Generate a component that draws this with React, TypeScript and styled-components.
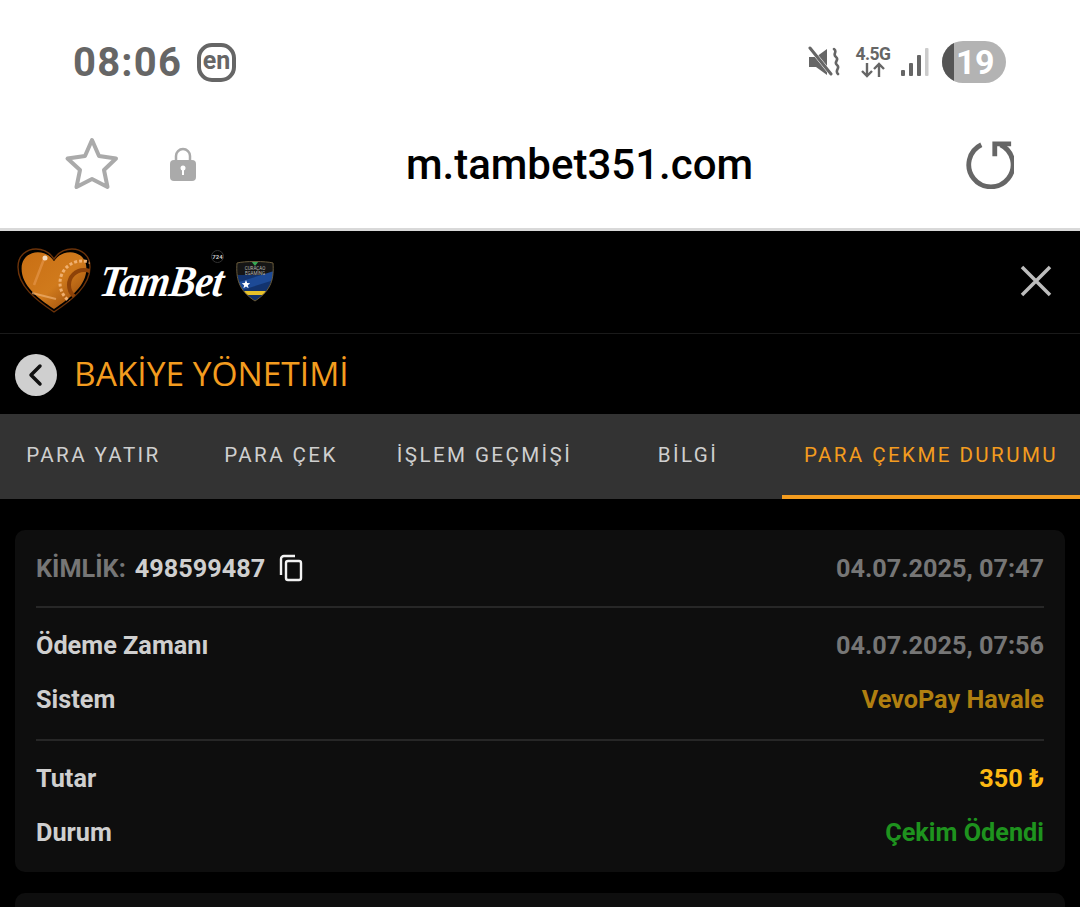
import React from "react";
import styled, { createGlobalStyle } from "styled-components";

const Global = createGlobalStyle`
  html, body { margin: 0; padding: 0; background: #000; }
  body { font-family: Roboto, "Liberation Sans", sans-serif; }
  #root { width: 1080px; height: 907px; overflow: hidden; }
  * { box-sizing: border-box; }
`;

const Page = styled.div`width: 1080px; height: 907px; background: #000; display: flex; flex-direction: column; overflow: hidden;`;
const Chrome = styled.div`background: #fff; height: 231px; border-bottom: 3px solid #d9d9d9; display: flex; flex-direction: column; flex: none;`;
const StatusBar = styled.div`height: 124px; padding: 0 74px 0 73px; display: flex; align-items: center; justify-content: space-between;`;
const StatusLeft = styled.div`display: flex; align-items: center; gap: 15px;`;
const Clock = styled.span`font-family: Roboto, sans-serif; font-weight: 700; font-size: 40px; letter-spacing: 1.2px; color: #666;`;
const LangBadge = styled.span`width: 39px; height: 39px; border: 4px solid #666; border-radius: 15px; display: flex; align-items: center; justify-content: center; color: #666; font-size: 25px; font-weight: 700; line-height: 1; padding-bottom: 3px;`;
const StatusRight = styled.div`display: flex; align-items: center;`;
const NetStack = styled.div`display: flex; flex-direction: column; align-items: center; margin: 0 9px 0 14px; width: 38px;`;
const NetLabel = styled.span`font-size: 17.5px; font-weight: 700; letter-spacing: -0.5px; color: #666; line-height: 16px;`;
const Battery = styled.div`position: relative; width: 64px; height: 42px; border-radius: 21px; margin-left: 13px; background: #b3b3b3; overflow: hidden; display: flex; align-items: center; justify-content: flex-end; padding-right: 12px;`;
const BatteryFill = styled.span`position: absolute; left: 0; top: 0; bottom: 0; width: 12px; background: #555;`;
const BatteryText = styled.span`color: #fff; font-size: 34px; font-weight: 700; line-height: 1; letter-spacing: -0.5px;`;
const AddressBar = styled.div`flex: 1; display: grid; grid-template-columns: 1fr auto 1fr; align-items: center; padding: 0 64px 24px 64px;`;
const AddressLeft = styled.div`display: flex; align-items: center; gap: 49px;`;
const AddressRight = styled.div`display: flex; justify-content: flex-end; margin-right: 2px;`;
const Url = styled.span`font-family: Roboto, sans-serif; font-weight: 500; font-size: 42px; color: #000; margin-left: 79px;`;

const Header = styled.div`height: 103px; flex: none; border-bottom: 1px solid #1a1a1a; display: flex; align-items: center; justify-content: space-between; padding: 0 28px 2px 16px;`;
const LogoWrap = styled.div`display: flex; align-items: center; position: relative;`;
const LogoText = styled.span`font-family: "Liberation Serif", serif; font-style: italic; font-weight: 700; font-size: 40px; color: #fff; margin: 0 11px 0 8px; letter-spacing: -0.7px; width: 125px; white-space: nowrap; transform: skewX(-8deg) scaleY(1.1);`;
const Badge724 = styled.span`position: absolute; left: 195px; top: 3px; width: 13px; height: 13px; border: 1px solid #333; border-radius: 50%; font-size: 6px; font-weight: 700; color: #ccc; display: flex; align-items: center; justify-content: center;`;
const TitleRow = styled.div`height: 80px; flex: none; display: flex; align-items: center; gap: 17px; padding: 2px 0 0 15px;`;
const BackButton = styled.div`width: 42px; height: 42px; border-radius: 50%; background: #cfcfcf; display: flex; align-items: center; justify-content: center;`;
const Title = styled.h1`margin: 0 0 5px; font-family: "Open Sans", sans-serif; font-weight: 400; font-size: 33.5px; color: #f39c1f; white-space: nowrap;`;
const Tabs = styled.div`height: 85px; flex: none; background: #333; display: grid; grid-template-columns: 187px 188px 219px 188px 298px;`;
const Tab = styled.div<{ $active?: boolean }>`display: flex; align-items: center; justify-content: center; font-size: 20.6px; letter-spacing: 2.4px; white-space: nowrap; color: ${(p) => (p.$active ? "#f39c1f" : "#cfcfcf")}; border-bottom: 4px solid ${(p) => (p.$active ? "#f39c1f" : "transparent")};`;
const Content = styled.div`flex: 1; padding: 31px 15px 0; display: flex; flex-direction: column; gap: 21px;`;
const Card = styled.div`background: #0e0e0e; border-radius: 10px; padding: 0 21px; flex: none;`;
const Section = styled.div<{ $last?: boolean; $first?: boolean }>`display: flex; flex-direction: column; padding: ${(p) => (p.$first ? "11px 0" : "10px 0 13px")}; border-bottom: ${(p) => (p.$last ? "none" : "2px solid #272727")};`;
const Row = styled.div`height: 54px; display: flex; align-items: center; justify-content: space-between; font-size: 25.25px; font-weight: 700;`;
const Label = styled.span`color: #cfcfcf; display: flex; align-items: center;`;
const Muted = styled.span`color: #767676;`;
const Id = styled.span`color: #cfcfcf; margin-left: 9px;`;
const CopyIcon = styled.span`display: inline-flex; margin-left: 13px;`;
const Value = styled.span<{ $color: string }>`color: ${(p) => p.$color};`;
const NextCard = styled(Card)`height: 60px;`;

const HEART = "M38 65C20 53 2 39 2 20C2 8 11 2 20 2C28 2 34 6 38 12C42 6 48 2 56 2C65 2 74 8 74 20C74 39 56 53 38 65Z";

const Heart = () => (
  <svg width="76" height="68" viewBox="0 0 76 68">
    <defs>
      <linearGradient id="h" x1="0" y1="0" x2="1" y2="1">
        <stop offset="0" stopColor="#c96f14" />
        <stop offset="0.55" stopColor="#d07a1c" />
        <stop offset="1" stopColor="#8e4208" />
      </linearGradient>
      <clipPath id="hc"><path d={HEART} /></clipPath>
    </defs>
    <path d={HEART} fill="url(#h)" transform="translate(3.800 3.400) scale(.9)" />
    <path d={HEART} fill="none" stroke="#6b3209" strokeWidth="1.400" />
    <g clipPath="url(#hc)" fill="none">
      <circle cx="66" cy="36" r="22" stroke="#f0b070" strokeWidth="3" strokeDasharray="3 2" />
      <circle cx="68" cy="38" r="15" stroke="#8e4208" strokeWidth="4" />
      <path d="M28 12L18 38" stroke="#e89a50" strokeWidth="2.500" opacity=".6" />
      <path d="M16 46L40 52" stroke="#f0b070" strokeWidth="2" opacity=".7" />
      <circle cx="29" cy="11" r="2.500" fill="#f6dcc0" />
    </g>
  </svg>
);

const Shield = () => (
  <svg width="38" height="42" viewBox="0 0 38 42">
    <defs><clipPath id="s"><path d="M1 3C8 1 30 1 37 3C38 18 36 30 19 41C2 30 0 18 1 3Z" /></clipPath></defs>
    <g clipPath="url(#s)">
      <rect width="38" height="42" fill="#12336e" />
      <rect width="38" height="15" fill="#151515" />
      <path d="M0 23L38 11V20L0 32Z" fill="#1d4a96" />
      <rect y="31" width="38" height="4" fill="#e8c22a" />
      <path d="M15 1h8l-4 5Z" fill="#38a855" />
      <text x="19" y="10" textAnchor="middle" fontSize="4.500" fill="#bbb" fontFamily="Roboto, sans-serif">CURAÇAO</text>
      <text x="19" y="14.500" textAnchor="middle" fontSize="4.500" fill="#bbb" fontFamily="Roboto, sans-serif">EGAMING</text>
      <path d="M10 20l1.200 3 3 .2-2.400 2 .8 3-2.600-1.700L7.400 28.200l.8-3-2.400-2 3-.2Z" fill="#fff" />
    </g>
    <path d="M1 3C8 1 30 1 37 3C38 18 36 30 19 41C2 30 0 18 1 3Z" fill="none" stroke="#6a5a38" strokeWidth="1" />
  </svg>
);

const Mute = () => (
  <svg width="32" height="32" viewBox="0 0 32 32" fill="#666">
    <path d="M1 11h7L19 3v26L8 21H1Z" />
    <path d="M2 2L23 28" stroke="#fff" strokeWidth="4" />
    <path d="M2 2L23 28" stroke="#666" strokeWidth="3" strokeLinecap="round" />
    <path d="M26 3c4 3-2 5 2 8s-3 5 1 8-3 5 1 9" fill="none" stroke="#666" strokeWidth="2.600" strokeLinecap="round" />
  </svg>
);
const Arrows = () => (
  <svg width="26" height="16" viewBox="0 0 26 16" fill="none" stroke="#666" strokeWidth="2.400">
    <path d="M7 1V14M2 9l5 5 5-5M19 15V2M14 7l5-5 5 5" />
  </svg>
);
const Signal = () => (
  <svg width="28" height="30" viewBox="0 0 28 30">
    <rect x="0" y="23" width="4" height="6" rx="1" fill="#666" />
    <rect x="8" y="16" width="4" height="13" rx="1" fill="#666" />
    <rect x="16" y="8" width="4" height="21" rx="1" fill="#666" />
    <rect x="24" y="1" width="3.500" height="28" rx="1" fill="#ccc" />
  </svg>
);
const Star = () => (
  <svg width="56" height="54" viewBox="0 0 56 54" fill="none">
    <path d="M28 3L35 19L52 21.500L40 33L43.500 50L28 42L12.500 50L16 33L3.500 21.500L21 19Z" stroke="#aaa" strokeWidth="4" strokeLinejoin="round" />
  </svg>
);
const Lock = () => (
  <svg width="28" height="36" viewBox="0 0 28 36">
    <path d="M7 15V10a7 7 0 0 1 14 0v5" fill="none" stroke="#aaa" strokeWidth="2.500" />
    <rect x="1" y="14" width="26" height="21" rx="4" fill="#aaa" />
    <circle cx="14" cy="22" r="2.500" fill="#fff" />
    <rect x="13" y="23" width="2" height="6" fill="#fff" />
  </svg>
);
const Reload = () => (
  <svg width="50" height="50" viewBox="0 0 52 52" fill="none" stroke="#666" strokeWidth="5">
    <path d="M18 6A23 23 0 1 0 38 6" />
    <path d="M32 18V5H49" />
  </svg>
);
const Close = () => (
  <svg width="32" height="32" viewBox="0 0 32 32" stroke="#bdbdbd" strokeWidth="3.500">
    <path d="M2 2L30 30M30 2L2 30" />
  </svg>
);
const Back = () => (
  <svg width="20" height="24" viewBox="0 0 20 24" fill="none" stroke="#111" strokeWidth="3.500" strokeLinecap="round" strokeLinejoin="round">
    <path d="M14 3L5 12L14 21" />
  </svg>
);
const Copy = () => (
  <svg width="26" height="28" viewBox="0 0 26 28" fill="none" stroke="#f2f2f2" strokeWidth="2.400">
    <path d="M3 21V5a3 3 0 0 1 3-3h11" />
    <rect x="8" y="7" width="15" height="19" rx="2" />
  </svg>
);

export default function App() {
  return (
    <Page>
      <Global />
      <Chrome>
        <StatusBar>
          <StatusLeft>
            <Clock>08:06</Clock>
            <LangBadge>en</LangBadge>
          </StatusLeft>
          <StatusRight>
            <Mute />
            <NetStack>
              <NetLabel>4.5G</NetLabel>
              <Arrows />
            </NetStack>
            <Signal />
            <Battery>
              <BatteryFill />
              <BatteryText>19</BatteryText>
            </Battery>
          </StatusRight>
        </StatusBar>
        <AddressBar>
          <AddressLeft>
            <Star />
            <Lock />
          </AddressLeft>
          <Url>m.tambet351.com</Url>
          <AddressRight><Reload /></AddressRight>
        </AddressBar>
      </Chrome>
      <Header>
        <LogoWrap>
          <Heart />
          <LogoText>TamBet</LogoText>
          <Badge724>724</Badge724>
          <Shield />
        </LogoWrap>
        <Close />
      </Header>
      <TitleRow>
        <BackButton><Back /></BackButton>
        <Title>BAKİYE YÖNETİMİ</Title>
      </TitleRow>
      <Tabs>
        <Tab>PARA YATIR</Tab>
        <Tab>PARA ÇEK</Tab>
        <Tab>İŞLEM GEÇMİŞİ</Tab>
        <Tab>BİLGİ</Tab>
        <Tab $active>PARA ÇEKME DURUMU</Tab>
      </Tabs>
      <Content>
        <Card>
          <Section $first>
            <Row>
              <Label><Muted>KİMLİK:</Muted><Id>498599487</Id><CopyIcon><Copy /></CopyIcon></Label>
              <Value $color="#767676">04.07.2025, 07:47</Value>
            </Row>
          </Section>
          <Section>
            <Row><Label>Ödeme Zamanı</Label><Value $color="#767676">04.07.2025, 07:56</Value></Row>
            <Row><Label>Sistem</Label><Value $color="#b07f10">VevoPay Havale</Value></Row>
          </Section>
          <Section $last>
            <Row><Label>Tutar</Label><Value $color="#fdb913">350 ₺</Value></Row>
            <Row><Label>Durum</Label><Value $color="#1e931e">Çekim Ödendi</Value></Row>
          </Section>
        </Card>
        <NextCard />
      </Content>
    </Page>
  );
}
